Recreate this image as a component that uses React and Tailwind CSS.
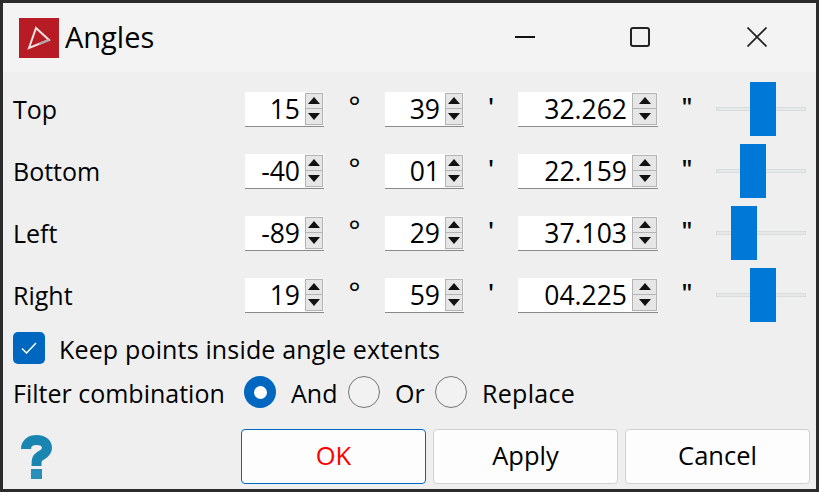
const rows = [
  { label: 'Top', deg: '15', min: '39', sec: '32.262', handle: 34 },
  { label: 'Bottom', deg: '-40', min: '01', sec: '22.159', handle: 24 },
  { label: 'Left', deg: '-89', min: '29', sec: '37.103', handle: 15 },
  { label: 'Right', deg: '19', min: '59', sec: '04.225', handle: 34 },
]

function Spin({ value, wide }) {
  return (
    <div className={`flex h-[35px] items-start border-b-[1.5px] border-[#8a8a8a] bg-[#f6f6f6] ${wide ? 'w-[140px]' : 'w-[79px]'}`}>
      <div className="flex h-full flex-1 items-center justify-end bg-white pt-[2px] pr-[5px] text-[26.5px] text-black">{value}</div>
      <div className={`mt-[1px] mr-[1px] flex h-[32px] shrink-0 flex-col border border-[#b4b4b4] bg-[#e6e6e6] ${wide ? 'w-[25px]' : 'w-[18px]'}`}>
        <div className="flex h-[15px] items-center justify-center border-b border-[#b4b4b4]">
          <svg width="12" height="7" viewBox="0 0 12 7"><path d="M6 0 12 7H0Z" fill="#111" /></svg>
        </div>
        <div className="flex flex-1 items-center justify-center">
          <svg width="12" height="7" viewBox="0 0 12 7"><path d="M0 0H12L6 7Z" fill="#111" /></svg>
        </div>
      </div>
    </div>
  )
}

function Slider({ left }) {
  return (
    <div className="relative flex h-[54px] w-[90px] items-center">
      <div className="h-[4px] w-full border border-[#d9dcdc] bg-[#e7e9e9]" />
      <div className="absolute top-0 h-[54px] w-[26px] bg-[#0078d7]" style={{ left }} />
    </div>
  )
}

function Radio({ checked }) {
  if (checked) {
    return (
      <div className="flex h-[32px] w-[32px] items-center justify-center rounded-full bg-[#0067c0]">
        <div className="h-[13px] w-[13px] rounded-full bg-white" />
      </div>
    )
  }
  return <div className="h-[32px] w-[32px] rounded-full border-[1.5px] border-[#767676] bg-[#f2f2f2]" />
}

function Btn({ children, primary }) {
  return (
    <button className={`h-[55px] w-[185px] rounded-[4px] border bg-[#fdfdfd] pb-[2px] text-[25.5px] ${primary ? 'border-[#0067c0] text-[#ff0000]' : 'border-[#d0d0d0] text-black'}`}>
      {children}
    </button>
  )
}

export default function App() {
  return (
    <div className="flex h-[492px] w-[819px] flex-col overflow-hidden border-[3px] border-[#2b2b2b] bg-[#efefef] text-[25px] leading-none text-black [font-family:'Open_Sans','Noto_Sans',sans-serif]">
      <header className="flex h-[69px] shrink-0 items-center bg-[#f3f3f3] pl-[16px]">
        <div className="flex h-[40px] w-[40px] items-center justify-center bg-[#b71c24]">
          <svg width="24" height="24" viewBox="0 0 24 24" fill="none" strokeWidth="2">
            <path d="M2 22 9 2 22 14Z" stroke="#f0e4e4" />
            <path d="M12 18 22 14" stroke="#a8a8a8" />
          </svg>
        </div>
        <span className="ml-[6px] pb-[2px] text-[29px]">Angles</span>
        <div className="ml-auto flex items-center pr-[49px] pb-[2px]">
          <div className="h-[2px] w-[20px] bg-[#111]" />
          <div className="ml-[95px] h-[20px] w-[20px] rounded-[3px] border-2 border-[#222]" />
          <svg className="ml-[97px]" width="20" height="20" viewBox="0 0 20 20" stroke="#222" strokeWidth="1.7">
            <path d="M0.5 0.5 19.5 19.5M19.5 0.5 0.5 19.5" />
          </svg>
        </div>
      </header>

      <main className="flex flex-1 flex-col pl-[10px]">
        <div className="mt-[10px] flex flex-col gap-[8px]">
          {rows.map((r) => (
            <div key={r.label} className="flex h-[54px] items-center">
              <span className="w-[232px]">{r.label}</span>
              <Spin value={r.deg} />
              <span className="w-[61px] pb-[6px] text-center text-[28px]">°</span>
              <Spin value={r.min} />
              <span className="w-[54px] pb-[5px] text-center font-semibold">'</span>
              <Spin value={r.sec} wide />
              <span className="w-[58px] pb-[5px] text-center font-semibold">"</span>
              <Slider left={r.handle} />
            </div>
          ))}
        </div>

        <label className="mt-[10px] flex h-[32px] items-center">
          <div className="flex h-[32px] w-[32px] items-center justify-center rounded-[5px] bg-[#0067c0]">
            <svg width="16" height="12" viewBox="0 0 16 12" fill="none" stroke="#fff" strokeWidth="1.5">
              <path d="M1 6.5 5.5 11 15 1" />
            </svg>
          </div>
          <span className="ml-[14px] pt-[2px] tracking-[0.16px]">Keep points inside angle extents</span>
        </label>

        <div className="mt-[12px] flex h-[32px] items-center">
          <span className="w-[231px] pt-[2px]">Filter combination</span>
          <Radio checked />
          <span className="ml-[15px] w-[57px] pt-[2px]">And</span>
          <Radio />
          <span className="ml-[15px] w-[40px] pt-[2px]">Or</span>
          <Radio />
          <span className="ml-[15px] pt-[2px] tracking-[0.3px]">Replace</span>
        </div>

        <footer className="mt-[21px] flex items-center">
          <svg className="ml-[8px]" width="31" height="44" viewBox="0 0 31 44" fill="none">
            <path d="M5 14C5 8 10 5 15.5 5C21.5 5 26 8 26 13C26 18 21.5 19.5 18.5 21.5C16 23 15.5 25 15.5 31" stroke="#1a85b0" strokeWidth="10" />
            <rect x="10" y="34" width="11" height="10" fill="#2a8fb8" />
          </svg>
          <div className="ml-auto mr-[6px] flex gap-[7px]">
            <Btn primary>OK</Btn>
            <Btn>Apply</Btn>
            <Btn>Cancel</Btn>
          </div>
        </footer>
      </main>
    </div>
  )
}
